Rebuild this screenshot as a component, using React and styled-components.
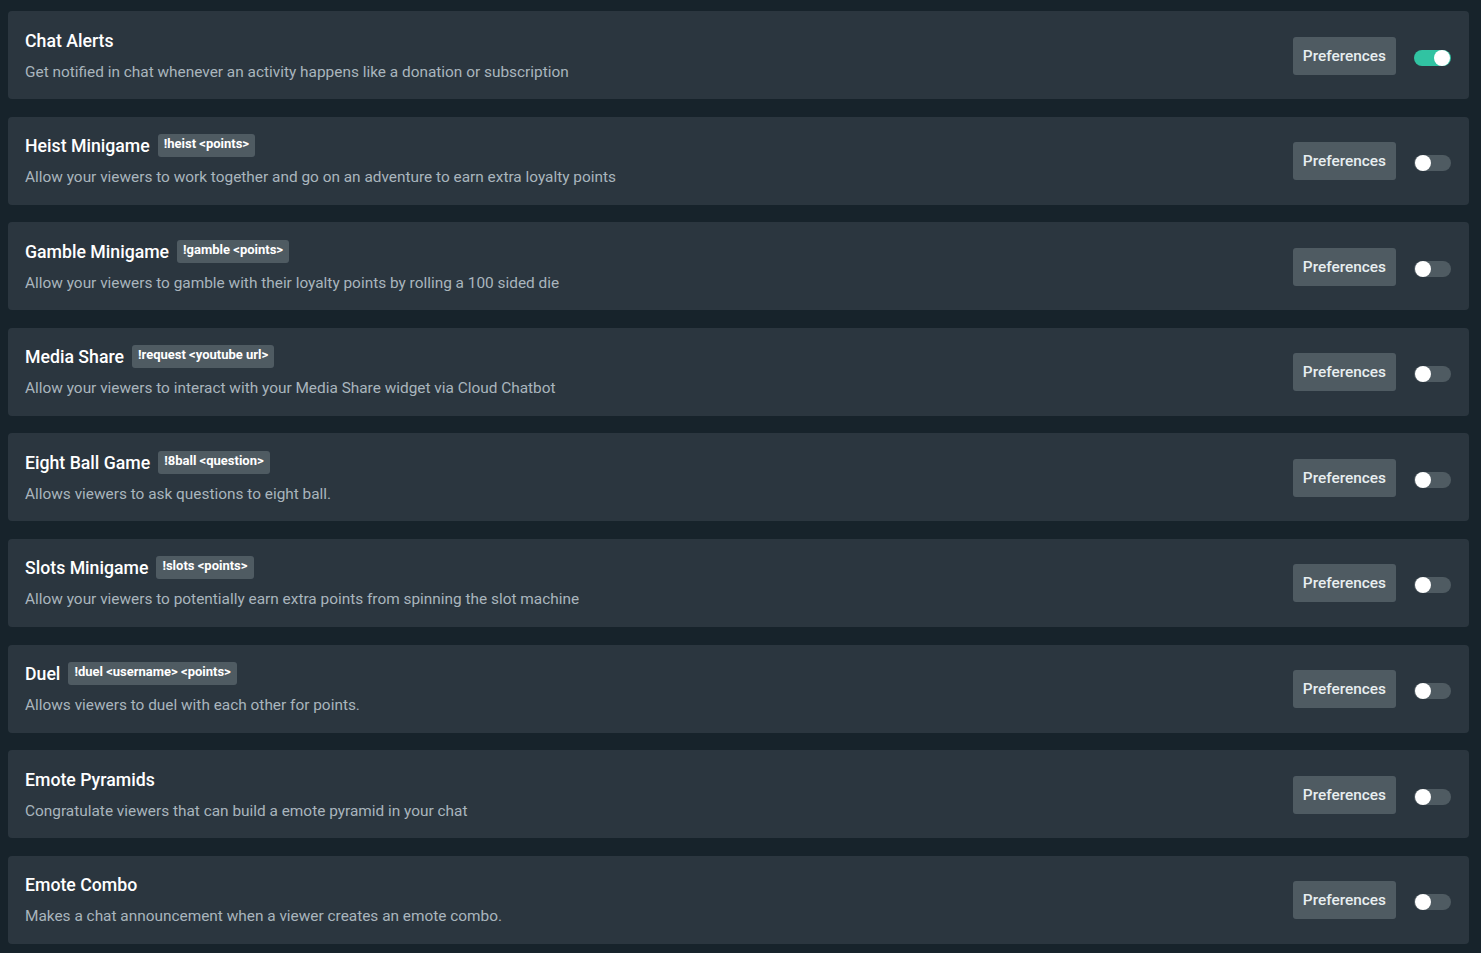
import React, { useState } from 'react';
import styled, { createGlobalStyle } from 'styled-components';

const GlobalStyle = createGlobalStyle`
  body {
    margin: 0;
    background: #17232b;
    font-family: Roboto, "Noto Sans", sans-serif;
  }
`;

const Container = styled.div`
  display: flex;
  flex-direction: column;
  gap: 17.6px;
  padding: 11px 12px 12px 8px;
`;

const Card = styled.div`
  display: flex;
  align-items: center;
  justify-content: space-between;
  height: 88px;
  box-sizing: border-box;
  padding: 0 18px 0 17px;
  background: #2b363f;
  border-radius: 4px;
`;

const Info = styled.div`
  display: flex;
  flex-direction: column;
  gap: 11px;
`;

const TitleRow = styled.div`
  display: flex;
  align-items: center;
  gap: 8px;
  height: 22px;
`;

const Title = styled.span`
  font-size: 17.7px;
  font-weight: 500;
  color: #ffffff;
`;

const Command = styled.span`
  display: inline-block;
  padding: 3px 6px 6px;
  font-size: 13px;
  font-weight: 700;
  line-height: 14px;
  color: #ffffff;
  background: #4f5b62;
  border-radius: 3px;
  margin-top: -1px;
`;

const Description = styled.div`
  font-size: 15.4px;
  color: #a9b5bd;
`;

const Actions = styled.div`
  display: flex;
  align-items: center;
  gap: 18px;
`;

const PrefButton = styled.button`
  height: 38px;
  padding: 0 10px;
  margin-top: 1px;
  border: none;
  border-radius: 3px;
  background: #4f5b62;
  color: #e8eef0;
  font-family: Roboto, sans-serif;
  font-size: 15.4px;
  font-weight: 500;
  cursor: pointer;
`;

const Toggle = styled.div`
  position: relative;
  width: 37px;
  height: 16px;
  margin-top: 5px;
  border-radius: 8px;
  background: ${(p) => (p.on ? '#31c3a2' : '#4f5b62')};
  cursor: pointer;

  &::after {
    content: '';
    position: absolute;
    top: 0;
    left: ${(p) => (p.on ? '20px' : '1px')};
    width: 16px;
    height: 16px;
    border-radius: 50%;
    background: #ffffff;
  }
`;

const modules = [
  { title: 'Chat Alerts', desc: 'Get notified in chat whenever an activity happens like a donation or subscription', on: true },
  { title: 'Heist Minigame', cmd: '!heist <points>', desc: 'Allow your viewers to work together and go on an adventure to earn extra loyalty points' },
  { title: 'Gamble Minigame', cmd: '!gamble <points>', desc: 'Allow your viewers to gamble with their loyalty points by rolling a 100 sided die' },
  { title: 'Media Share', cmd: '!request <youtube url>', desc: 'Allow your viewers to interact with your Media Share widget via Cloud Chatbot' },
  { title: 'Eight Ball Game', cmd: '!8ball <question>', desc: 'Allows viewers to ask questions to eight ball.' },
  { title: 'Slots Minigame', cmd: '!slots <points>', desc: 'Allow your viewers to potentially earn extra points from spinning the slot machine' },
  { title: 'Duel', cmd: '!duel <username> <points>', desc: 'Allows viewers to duel with each other for points.' },
  { title: 'Emote Pyramids', desc: 'Congratulate viewers that can build a emote pyramid in your chat' },
  { title: 'Emote Combo', desc: 'Makes a chat announcement when a viewer creates an emote combo.' },
];

const App = () => {
  const [enabled, setEnabled] = useState(modules.map((m) => !!m.on));

  const flip = (i) => {
    setEnabled(enabled.map((v, j) => (j === i ? !v : v)));
  };

  return (
    <Container>
      <GlobalStyle />
      {modules.map((m, i) => (
        <Card key={m.title}>
          <Info>
            <TitleRow>
              <Title>{m.title}</Title>
              {m.cmd && <Command>{m.cmd}</Command>}
            </TitleRow>
            <Description>{m.desc}</Description>
          </Info>
          <Actions>
            <PrefButton>Preferences</PrefButton>
            <Toggle on={enabled[i]} onClick={() => flip(i)} />
          </Actions>
        </Card>
      ))}
    </Container>
  );
};

export default App;
